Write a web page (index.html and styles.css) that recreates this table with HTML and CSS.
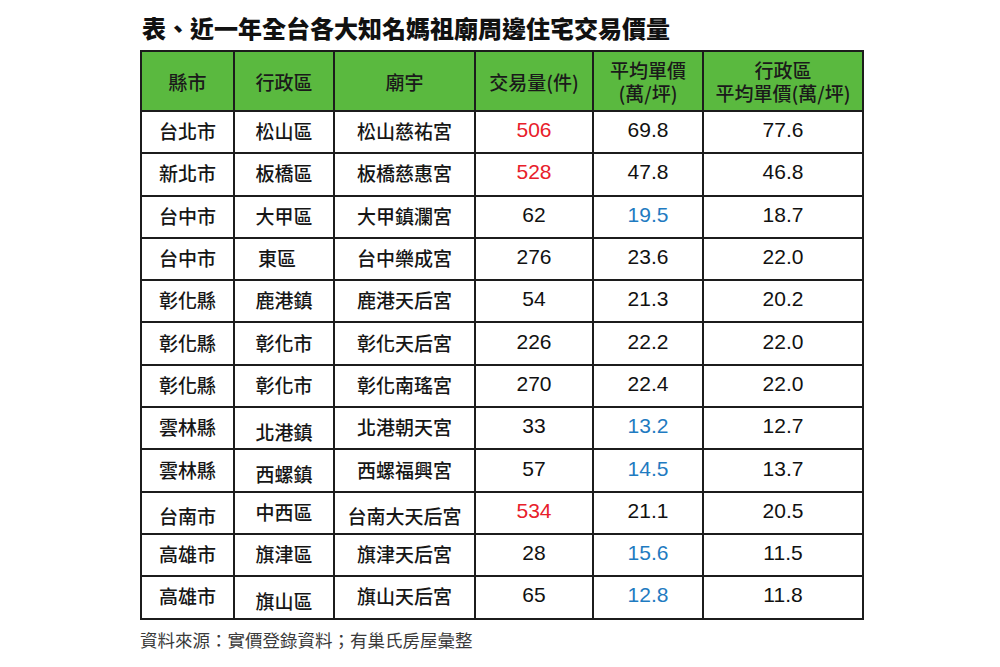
FILE: index.html
```html
<!DOCTYPE html>
<html lang="zh-Hant">
<head>
<meta charset="utf-8">
<title>近一年全台各大知名媽祖廟周邊住宅交易價量</title>
<link rel="stylesheet" href="styles.css">
</head>
<body>
<div class="page">
  <h1 class="title">表、近一年全台各大知名媽祖廟周邊住宅交易價量</h1>
  <table class="data">
    <colgroup>
      <col class="c1"><col class="c2"><col class="c3"><col class="c4"><col class="c5"><col class="c6">
    </colgroup>
    <thead>
      <tr>
        <th>縣市</th>
        <th>行政區</th>
        <th>廟宇</th>
        <th>交易量(件)</th>
        <th>平均單價<br>(萬/坪)</th>
        <th>行政區<br>平均單價(萬/坪)</th>
      </tr>
    </thead>
    <tbody>
      <tr><td>台北市</td><td>松山區</td><td>松山慈祐宮</td><td class="num red">506</td><td class="num">69.8</td><td class="num">77.6</td></tr>
      <tr><td>新北市</td><td>板橋區</td><td>板橋慈惠宮</td><td class="num red">528</td><td class="num">47.8</td><td class="num">46.8</td></tr>
      <tr><td>台中市</td><td>大甲區</td><td>大甲鎮瀾宮</td><td class="num">62</td><td class="num blue">19.5</td><td class="num">18.7</td></tr>
      <tr><td>台中市</td><td class="shift-left">東區</td><td>台中樂成宮</td><td class="num">276</td><td class="num">23.6</td><td class="num">22.0</td></tr>
      <tr><td>彰化縣</td><td>鹿港鎮</td><td>鹿港天后宮</td><td class="num">54</td><td class="num">21.3</td><td class="num">20.2</td></tr>
      <tr><td>彰化縣</td><td>彰化市</td><td>彰化天后宮</td><td class="num">226</td><td class="num">22.2</td><td class="num">22.0</td></tr>
      <tr><td>彰化縣</td><td>彰化市</td><td>彰化南瑤宮</td><td class="num">270</td><td class="num">22.4</td><td class="num">22.0</td></tr>
      <tr><td>雲林縣</td><td class="low">北港鎮</td><td>北港朝天宮</td><td class="num">33</td><td class="num blue">13.2</td><td class="num">12.7</td></tr>
      <tr><td>雲林縣</td><td class="low">西螺鎮</td><td>西螺福興宮</td><td class="num">57</td><td class="num blue">14.5</td><td class="num">13.7</td></tr>
      <tr><td class="low">台南市</td><td>中西區</td><td class="low">台南大天后宮</td><td class="num red">534</td><td class="num">21.1</td><td class="num">20.5</td></tr>
      <tr><td>高雄市</td><td>旗津區</td><td>旗津天后宮</td><td class="num">28</td><td class="num blue">15.6</td><td class="num">11.5</td></tr>
      <tr><td>高雄市</td><td class="low">旗山區</td><td>旗山天后宮</td><td class="num">65</td><td class="num blue">12.8</td><td class="num">11.8</td></tr>
    </tbody>
  </table>
  <p class="source">資料來源：實價登錄資料；有巢氏房屋彙整</p>
</div>
</body>
</html>
```
FILE: styles.css
```css
html, body {
  margin: 0;
  padding: 0;
  background: #ffffff;
}

.page {
  padding: 14px 0 0 140px;
  font-family: "Noto Sans CJK TC", "Noto Sans", sans-serif;
  color: #111;
}

.title {
  margin: 0 0 8px 2px;
  font-size: 24px;
  line-height: 28px;
  font-weight: 900;
  color: #111;
}

.data {
  border-collapse: collapse;
  width: 722px;
  table-layout: fixed;
  border: 2px solid #1c1c1c;
}

.c1 { width: 93px; }
.c2 { width: 100px; }
.c3 { width: 141px; }
.c4 { width: 118px; }
.c5 { width: 110px; }
.c6 { width: 160px; }

.data th,
.data td {
  box-sizing: border-box;
  border: 2px solid #1c1c1c;
  text-align: center;
  vertical-align: middle;
  padding: 0;
}

.data th {
  background: #5ab93f;
  height: 60px;
  font-size: 19px;
  line-height: 23px;
  font-weight: 500;
  color: #1a1a1a;
}

.data tbody tr {
  height: 42.3px;
}

.data td {
  height: 42.3px;
  font-size: 19px;
  line-height: 20px;
  font-weight: 500;
  color: #161616;
  padding-bottom: 2px;
}

.data td.num {
  font-family: "Liberation Sans", Arial, sans-serif;
  font-size: 21px;
  font-weight: 400;
  color: #111;
  padding-bottom: 4px;
}

.data td.red { color: #e8202a; }
.data td.blue { color: #1f7bc1; }

.data td.low {
  padding-top: 7px;
  padding-bottom: 0;
}

.data td.shift-left {
  padding-right: 14px;
}

.source {
  margin: 8px 0 0 0;
  font-size: 17.5px;
  line-height: 24px;
  color: #3a3a3a;
  font-weight: 400;
}
```
